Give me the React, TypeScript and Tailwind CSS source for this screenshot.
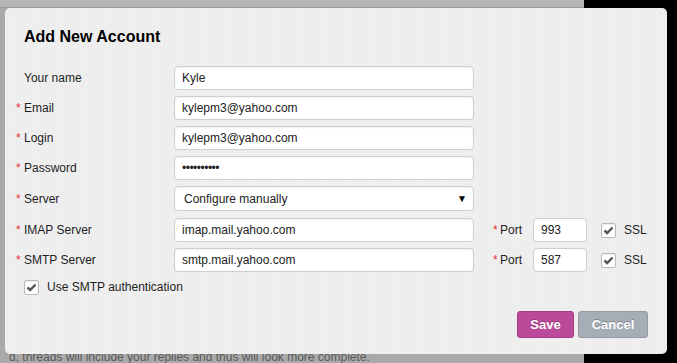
import { useState } from "react";

function Check({ checked }: { checked: boolean }) {
  return (
    <span className="flex h-[15px] w-[15px] items-center justify-center rounded-[2px] border border-[#b9b9b9] bg-white shadow-[inset_0_1px_1px_rgba(0,0,0,0.08)]">
      {checked && (
        <svg width="11" height="9" viewBox="0 0 11 9">
          <path d="M1.5 4.5 L4.2 7 L9.5 1.5" fill="none" stroke="#555" strokeWidth="2.4" />
        </svg>
      )}
    </span>
  );
}

function Label({ text, required }: { text: string; required?: boolean }) {
  return (
    <div className="flex w-[158px] items-center">
      <span className="w-2 text-[12px] text-[#e2322d]">{required ? "*" : ""}</span>
      <span>{text}</span>
    </div>
  );
}

const inputCls =
  "h-6 w-[300px] rounded-[4px] border border-[#cfcfcf] bg-white px-[7px] text-[12px] text-[#222] shadow-[inset_0_1px_2px_rgba(0,0,0,0.06)] outline-none";

export default function App() {
  const [name, setName] = useState("Kyle");
  const [email, setEmail] = useState("kylepm3@yahoo.com");
  const [login, setLogin] = useState("kylepm3@yahoo.com");
  const [imap, setImap] = useState("imap.mail.yahoo.com");
  const [smtp, setSmtp] = useState("smtp.mail.yahoo.com");

  const servers = [
    { label: "IMAP Server", value: imap, set: setImap, port: "993" },
    { label: "SMTP Server", value: smtp, set: setSmtp, port: "587" },
  ];

  return (
    <div className="relative h-[363px] w-[677px] overflow-hidden font-['Liberation_Sans',Arial,sans-serif] text-[12px] text-[#1e1e1e]">
      {/* dimmed page behind the modal */}
      <div className="flex h-full w-full">
        <div className="flex w-[584px] flex-col bg-[#a9a9a9]">
          <div className="h-[8px] border-b border-[#9a9a9a] bg-[#b5b5b5]" />
          <div className="flex-1" />
          <p className="whitespace-nowrap pl-[9px] text-[12px] leading-[12px] text-[#5a5a5a]">
            d, threads will include your replies and thus will look more complete.
          </p>
        </div>
        <div className="flex-1 bg-black" />
      </div>

      {/* modal */}
      <div className="absolute left-[5px] top-[8px] h-[346px] w-[662px] rounded-[5px] bg-[repeating-linear-gradient(90deg,#efefef_0px,#efefef_2px,#ececec_2px,#ececec_3px)] pl-[11px] pt-[19px]">
        <h2 className="ml-[8px] text-[16px] font-bold leading-[20px] text-black">Add New Account</h2>

        <div className="mt-[19px] flex flex-col gap-[6px]">
          <div className="flex items-center">
            <Label text="Your name" />
            <input className={inputCls} value={name} onChange={(e) => setName(e.target.value)} />
          </div>
          <div className="flex items-center">
            <Label text="Email" required />
            <input className={inputCls} value={email} onChange={(e) => setEmail(e.target.value)} />
          </div>
          <div className="flex items-center">
            <Label text="Login" required />
            <input className={inputCls} value={login} onChange={(e) => setLogin(e.target.value)} />
          </div>
          <div className="flex items-center">
            <Label text="Password" required />
            <div className={inputCls + " flex items-center text-[11px] tracking-[-0.5px]"}>••••••••••</div>
          </div>
          <div className="flex items-center">
            <Label text="Server" required />
            <div className={inputCls + " flex h-[25px] items-center justify-between pl-[9px] pr-[6px]"}>
              <span>Configure manually</span>
              <span className="text-[10px] text-black">▼</span>
            </div>
          </div>
          <div className="mt-[1px] flex flex-col gap-[6px]">
            {servers.map((s) => (
              <div key={s.label} className="flex items-center">
                <Label text={s.label} required />
                <input className={inputCls} value={s.value} onChange={(e) => s.set(e.target.value)} />
                <div className="ml-[19px] flex w-[40px] items-center">
                  <span className="w-[7px] text-[12px] text-[#e2322d]">*</span>
                  <span>Port</span>
                </div>
                <input
                  className="h-6 w-[54px] rounded-[4px] border border-[#cfcfcf] bg-white px-[7px] text-[12px] text-[#222] outline-none"
                  defaultValue={s.port}
                />
                <span className="ml-[14px]">
                  <Check checked />
                </span>
                <span className="ml-[8px]">SSL</span>
              </div>
            ))}
          </div>
          <div className="ml-[8px] flex items-center gap-[8px]">
            <Check checked />
            <span>Use SMTP authentication</span>
          </div>
        </div>

        <div className="mr-[19px] mt-[15px] flex justify-end gap-[4px]">
          <button className="h-[27px] w-[57px] rounded-[3px] border border-[#a63a86] bg-[#bc4a9b] text-[13px] font-bold text-white [text-shadow:0_-1px_0_rgba(0,0,0,0.25)]">
            Save
          </button>
          <button className="h-[27px] w-[70px] rounded-[3px] border border-[#939aa4] bg-[#a5adb6] text-[13px] font-bold text-white [text-shadow:0_-1px_0_rgba(0,0,0,0.25)]">
            Cancel
          </button>
        </div>
      </div>
    </div>
  );
}
